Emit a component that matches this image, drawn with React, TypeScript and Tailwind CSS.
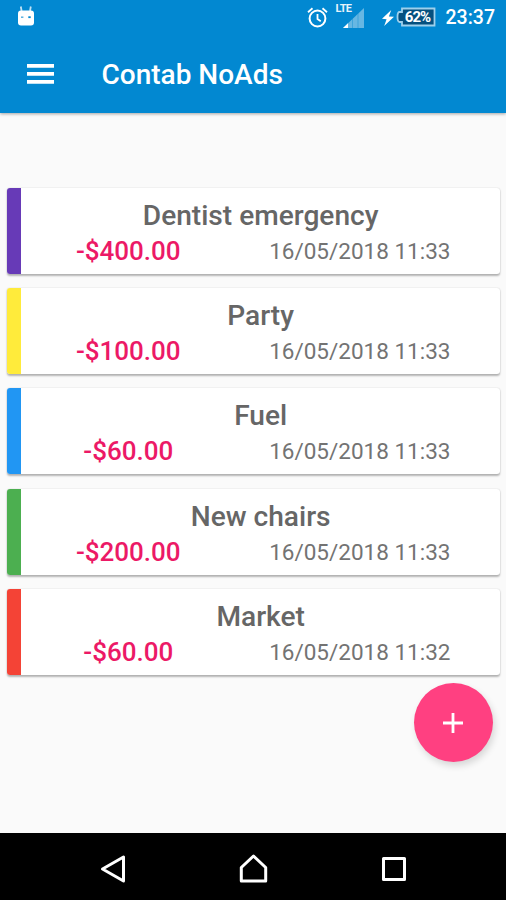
import React from "react";

interface Entry {
  title: string;
  amount: string;
  date: string;
  color: string;
}

const entries: Entry[] = [
  { title: "Dentist emergency", amount: "-$400.00", date: "16/05/2018 11:33", color: "bg-[#673ab7]" },
  { title: "Party", amount: "-$100.00", date: "16/05/2018 11:33", color: "bg-[#ffeb3b]" },
  { title: "Fuel", amount: "-$60.00", date: "16/05/2018 11:33", color: "bg-[#2196f3]" },
  { title: "New chairs", amount: "-$200.00", date: "16/05/2018 11:33", color: "bg-[#4caf50]" },
  { title: "Market", amount: "-$60.00", date: "16/05/2018 11:32", color: "bg-[#f44336]" },
];

const StatusBar: React.FC = () => (
  <div className="flex h-9 items-start justify-between text-white">
    <svg className="mt-1.5 ml-[17px] h-5 w-[18px]" viewBox="0 0 18 20" fill="currentColor">
      <path d="M4.6 5 3.8.5M13 5l.8-4.5" stroke="currentColor" strokeWidth="1.8" opacity="0.75" />
      <rect x="1" y="4.5" width="16" height="15" rx="3" />
      <rect x="4" y="10.5" width="2.4" height="1.4" fill="#0288d1" opacity="0.7" />
      <rect x="11.3" y="10.3" width="2.4" height="1.8" fill="#0288d1" />
    </svg>
    <div className="flex items-start pr-[11px]">
      {/* alarm */}
      <svg className="mt-[7px] h-[21px] w-[21px]" viewBox="0 0 21 21" fill="none" stroke="currentColor" strokeWidth="2">
        <circle cx="10.5" cy="11.5" r="7.9" />
        <path d="M10.5 7v5l3.3 2.2M1 5.2l4.5-3.9M20 5.2l-4.5-3.9" strokeWidth="1.8" />
      </svg>
      {/* LTE signal */}
      <div className="relative ml-2 h-9 w-7">
        <span className="absolute top-[3px] left-0 text-[11px] leading-[11px] font-bold tracking-[-0.6px] opacity-90">LTE</span>
        <svg className="absolute top-2 left-[7px] h-5 w-[21px]" viewBox="0 0 21 20" fill="currentColor">
          <path d="M21 0v20H0z" opacity="0.4" />
          <path d="M5 15.2V20H0z" />
          <path d="M9.5 10.5V20M15 5V20" stroke="#0288d1" strokeWidth="1" opacity="0.4" />
        </svg>
      </div>
      <svg className="mt-2.5 ml-[18px] h-4 w-3" viewBox="0 0 11 16" preserveAspectRatio="none" fill="currentColor">
        <path d="M8.5 0 0 8.8l4.2.4L2 16l9-9.3-4.7-.3z" />
      </svg>
      <div className="relative mt-[7px] ml-[2px] h-5 w-10">
        <svg className="absolute inset-0 h-5 w-10" viewBox="0 0 40 20">
          <path d="M6 1.5h32.5v17H6V15H3.5Q1.5 15 1.5 10T3.5 5H6z" fill="#05507f" stroke="#9ed0ec" strokeWidth="1.8" />
        </svg>
        <span className="absolute inset-0 pl-1 text-center text-[15px] leading-5 font-bold tracking-[-0.9px]">62%</span>
      </div>
      <span className="mt-[6px] ml-[10px] text-[19.5px] leading-6 font-medium">23:37</span>
    </div>
  </div>
);

const EntryCard: React.FC<{ entry: Entry }> = ({ entry }) => (
  <div className="flex h-[86px] overflow-hidden rounded-[3px] bg-white shadow-[0_1.5px_2px_rgba(0,0,0,0.28),0_0_1.5px_rgba(0,0,0,0.12)]">
    <div className={`w-3.5 shrink-0 ${entry.color}`} />
    <div className="flex-1 pt-2.5">
      <h2 className="text-center text-[28.1px] leading-9 font-medium text-[#666]">{entry.title}</h2>
      <div className="-mt-px flex leading-9">
        <span className="w-[214px] text-center text-[26px] font-medium text-[#ec1966]">{entry.amount}</span>
        <span className="w-[249px] text-center text-[22.5px] text-[#737373]">{entry.date}</span>
      </div>
    </div>
  </div>
);

const NavBar: React.FC = () => (
  <nav className="flex h-[67px] items-center justify-between bg-black pt-1 pr-[98px] pl-[98px] text-white">
    <svg className="h-8 w-7" viewBox="0 0 28 32" fill="none" stroke="currentColor" strokeWidth="3" strokeLinejoin="round">
      <path d="M25.5 4v24L4.5 16z" />
    </svg>
    <svg className="h-8 w-8" viewBox="0 0 32 32" fill="none" stroke="currentColor" strokeWidth="3" strokeLinejoin="round">
      <path d="M4.3 28V14.5L16.5 3l12.2 11.5V28z" />
    </svg>
    <svg className="h-7 w-7" viewBox="0 0 28 28" fill="none" stroke="currentColor" strokeWidth="3" strokeLinejoin="round">
      <rect x="3.5" y="3.5" width="21" height="21" />
    </svg>
  </nav>
);

const App: React.FC = () => {
  return (
    <div className="flex h-[900px] w-[506px] flex-col overflow-hidden bg-[#fafafa] font-['Roboto',sans-serif]">
      <header className="h-[112.5px] shrink-0 bg-[#0288d1] shadow-[0_1px_3px_rgba(0,0,0,0.35)]">
        <StatusBar />
        <div className="flex h-[77px] items-center pl-[26.5px] text-white">
          <button className="-mt-0.5" aria-label="Menu">
            <svg className="h-5 w-[27px]" viewBox="0 0 27 20" fill="currentColor">
              <path d="M0 0h27v3.8H0zM0 8h27v3.8H0zM0 16h27v3.8H0z" />
            </svg>
          </button>
          <h1 className="ml-12 text-[28px] font-medium">Contab NoAds</h1>
        </div>
      </header>

      <main className="flex flex-1 flex-col pt-[75.2px] pr-[6px] pl-[7.3px]">
        <div className="flex flex-col gap-[14.3px]">
          {entries.map((entry) => (
            <EntryCard key={entry.title} entry={entry} />
          ))}
        </div>
        <button
          className="mt-[8.5px] mr-[7px] flex h-[79px] w-[79px] items-center justify-center self-end rounded-full bg-[#ff4081] text-white shadow-[2px_4px_7px_rgba(0,0,0,0.14)]"
          aria-label="Add"
        >
          <svg className="mr-px h-5 w-5" viewBox="0 0 20 20" stroke="currentColor" strokeWidth="2.8">
            <path d="M10 0v20M0 10h20" />
          </svg>
        </button>
      </main>

      <NavBar />
    </div>
  );
};

export default App;
